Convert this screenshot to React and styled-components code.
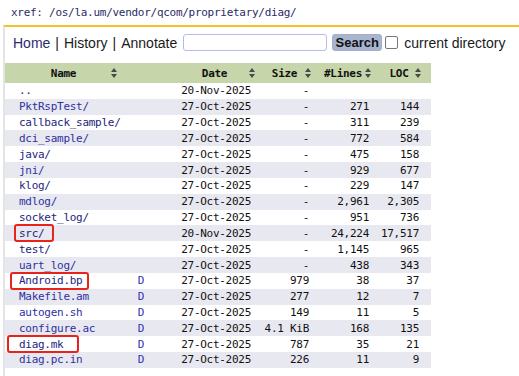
import React from 'react'
import styled, { createGlobalStyle } from 'styled-components'

const GlobalStyle = createGlobalStyle`
  body {
    margin: 0;
    background: #fff;
    font-family: "Liberation Sans", Arial, sans-serif;
  }
`

const mono = `"DejaVu Sans Mono", "Liberation Mono", monospace`

const XrefBar = styled.div`
  height: 25px;
  box-sizing: border-box;
  padding: 6px 0 0 11px;
  font-family: ${mono};
  font-size: 11px;
  letter-spacing: -0.28px;
  color: #2b2b66;
`

const Panel = styled.div`
  margin-left: 3px;
  border-left: 2px solid #e4e4e4;
  border-top: 2px solid #f6c22c;
  min-height: 349px;
`

const Nav = styled.div`
  display: flex;
  align-items: center;
  height: 31px;
  padding-left: 8px;
  font-size: 14px;
  color: #1a1a1a;
`

const NavLink = styled.span`
  color: ${p => (p.$home ? '#2c2c70' : '#1a1a1a')};
`

const Sep = styled.span`
  margin: 0 5px;
`

const SearchInput = styled.input`
  width: 144px;
  height: 17px;
  box-sizing: border-box;
  margin-left: 6px;
  border: 1px solid #b9b9ef;
  border-radius: 3px;
  padding: 0 3px;
  outline: none;
`

const SearchButton = styled.button`
  width: 50px;
  height: 17px;
  margin-left: 5px;
  padding: 0;
  border: 1px solid #a2aecb;
  border-radius: 3px;
  background: #a9b5cf;
  font-family: "Liberation Sans", Arial, sans-serif;
  font-size: 13px;
  font-weight: bold;
  color: #111;
  line-height: 15px;
`

const CheckBox = styled.span`
  width: 13px;
  height: 13px;
  box-sizing: border-box;
  margin-left: 3px;
  border: 1px solid #777;
  border-radius: 2px;
  background: #fff;
`

const CheckLabel = styled.span`
  margin-left: 6px;
`

const Table = styled.table`
  margin-top: 5px;
  width: 426px;
  border-collapse: collapse;
  table-layout: fixed;
  font-family: ${mono};
  font-size: 11px;
  letter-spacing: -0.28px;
`

const HeadRow = styled.tr`
  background: #c6d5aa;
  height: 20px;
`

const Th = styled.th`
  position: relative;
  box-sizing: border-box;
  width: ${p => p.$w}px;
  padding: 0 ${p => p.$pr || 0}px 0 ${p => p.$pl || 0}px;
  text-align: center;
  font-weight: bold;
  color: #111;
`

const SortIcon = styled.svg`
  position: absolute;
  top: 5px;
  right: ${p => p.$r}px;
`

const Row = styled.tr`
  height: 15.83px;
  background: ${p => (p.$odd ? '#e8e8f0' : '#fff')};
`

const Td = styled.td`
  padding: 0 ${p => p.$pr || 0}px 0 ${p => p.$pl || 0}px;
  text-align: ${p => p.$align || 'left'};
  color: #111;
  white-space: nowrap;
  line-height: 15px;
`

const NameCell = styled(Td)`
  position: relative;
`

const NameLink = styled.span`
  color: ${p => (p.$visited ? '#24247c' : '#3030a0')};
`

const DLink = styled.span`
  color: #3434b0;
`

const Mark = styled.span`
  position: absolute;
  top: -1px;
  bottom: -1px;
  border: 2px solid #e8231c;
  border-radius: 3px;
  box-sizing: border-box;
`

const Sort = ({ r }) => (
  <SortIcon $r={r} width="6" height="10" viewBox="0 0 6 10">
    <path d="M3 0 L6 4 L0 4 Z M0 6 L6 6 L3 10 Z" fill="#4a4a4a" />
  </SortIcon>
)

const rows = [
  { name: '..', date: '20-Nov-2025', size: '-', lines: '', loc: '', v: true },
  { name: 'PktRspTest/', date: '27-Oct-2025', size: '-', lines: '271', loc: '144' },
  { name: 'callback_sample/', date: '27-Oct-2025', size: '-', lines: '311', loc: '239', v: true },
  { name: 'dci_sample/', date: '27-Oct-2025', size: '-', lines: '772', loc: '584' },
  { name: 'java/', date: '27-Oct-2025', size: '-', lines: '475', loc: '158', v: true },
  { name: 'jni/', date: '27-Oct-2025', size: '-', lines: '929', loc: '677' },
  { name: 'klog/', date: '27-Oct-2025', size: '-', lines: '229', loc: '147', v: true },
  { name: 'mdlog/', date: '27-Oct-2025', size: '-', lines: '2,961', loc: '2,305' },
  { name: 'socket_log/', date: '27-Oct-2025', size: '-', lines: '951', loc: '736', v: true },
  { name: 'src/', date: '20-Nov-2025', size: '-', lines: '24,224', loc: '17,517', v: true, mark: { left: 9, width: 40 } },
  { name: 'test/', date: '27-Oct-2025', size: '-', lines: '1,145', loc: '965', v: true },
  { name: 'uart_log/', date: '27-Oct-2025', size: '-', lines: '438', loc: '343' },
  { name: 'Android.bp', d: true, date: '27-Oct-2025', size: '979', lines: '38', loc: '37', v: true, mark: { left: 5, width: 79 } },
  { name: 'Makefile.am', d: true, date: '27-Oct-2025', size: '277', lines: '12', loc: '7' },
  { name: 'autogen.sh', d: true, date: '27-Oct-2025', size: '149', lines: '11', loc: '5' },
  { name: 'configure.ac', d: true, date: '27-Oct-2025', size: '4.1 KiB', lines: '168', loc: '135' },
  { name: 'diag.mk', d: true, date: '27-Oct-2025', size: '787', lines: '35', loc: '21', v: true, mark: { left: 2, width: 72 } },
  { name: 'diag.pc.in', d: true, date: '27-Oct-2025', size: '226', lines: '11', loc: '9' },
]

const App = () => {
  return (
    <>
      <GlobalStyle />
      <XrefBar>xref: /os/la.um/vendor/qcom/proprietary/diag/</XrefBar>
      <Panel>
        <Nav>
          <NavLink $home>Home</NavLink>
          <Sep>|</Sep>
          <NavLink>History</NavLink>
          <Sep>|</Sep>
          <NavLink>Annotate</NavLink>
          <SearchInput type="text" />
          <SearchButton>Search</SearchButton>
          <CheckBox />
          <CheckLabel>current directory</CheckLabel>
        </Nav>
        <Table>
          <thead>
            <HeadRow>
              <Th $w={117}>Name<Sort r={5} /></Th>
              <Th $w={38}></Th>
              <Th $w={98} $pl={11}>Date<Sort r={3} /></Th>
              <Th $w={58} $pr={5}>Size<Sort r={5} /></Th>
              <Th $w={61} $pr={7}>#Lines<Sort r={6} /></Th>
              <Th $w={54} $pr={10}>LOC<Sort r={10} /></Th>
            </HeadRow>
          </thead>
          <tbody>
            {rows.map((r, i) => (
              <Row key={r.name} $odd={i % 2 === 1}>
                <NameCell $pl={14}>
                  <NameLink $visited={r.v}>{r.name}</NameLink>
                  {r.mark && <Mark style={{ left: r.mark.left, width: r.mark.width }} />}
                </NameCell>
                <Td $align="center">{r.d && <DLink>D</DLink>}</Td>
                <Td $align="right" $pr={7}>{r.date}</Td>
                <Td $align="right" $pr={7}>{r.size}</Td>
                <Td $align="right" $pr={8}>{r.lines}</Td>
                <Td $align="right" $pr={12}>{r.loc}</Td>
              </Row>
            ))}
          </tbody>
        </Table>
      </Panel>
    </>
  )
}

export default App
